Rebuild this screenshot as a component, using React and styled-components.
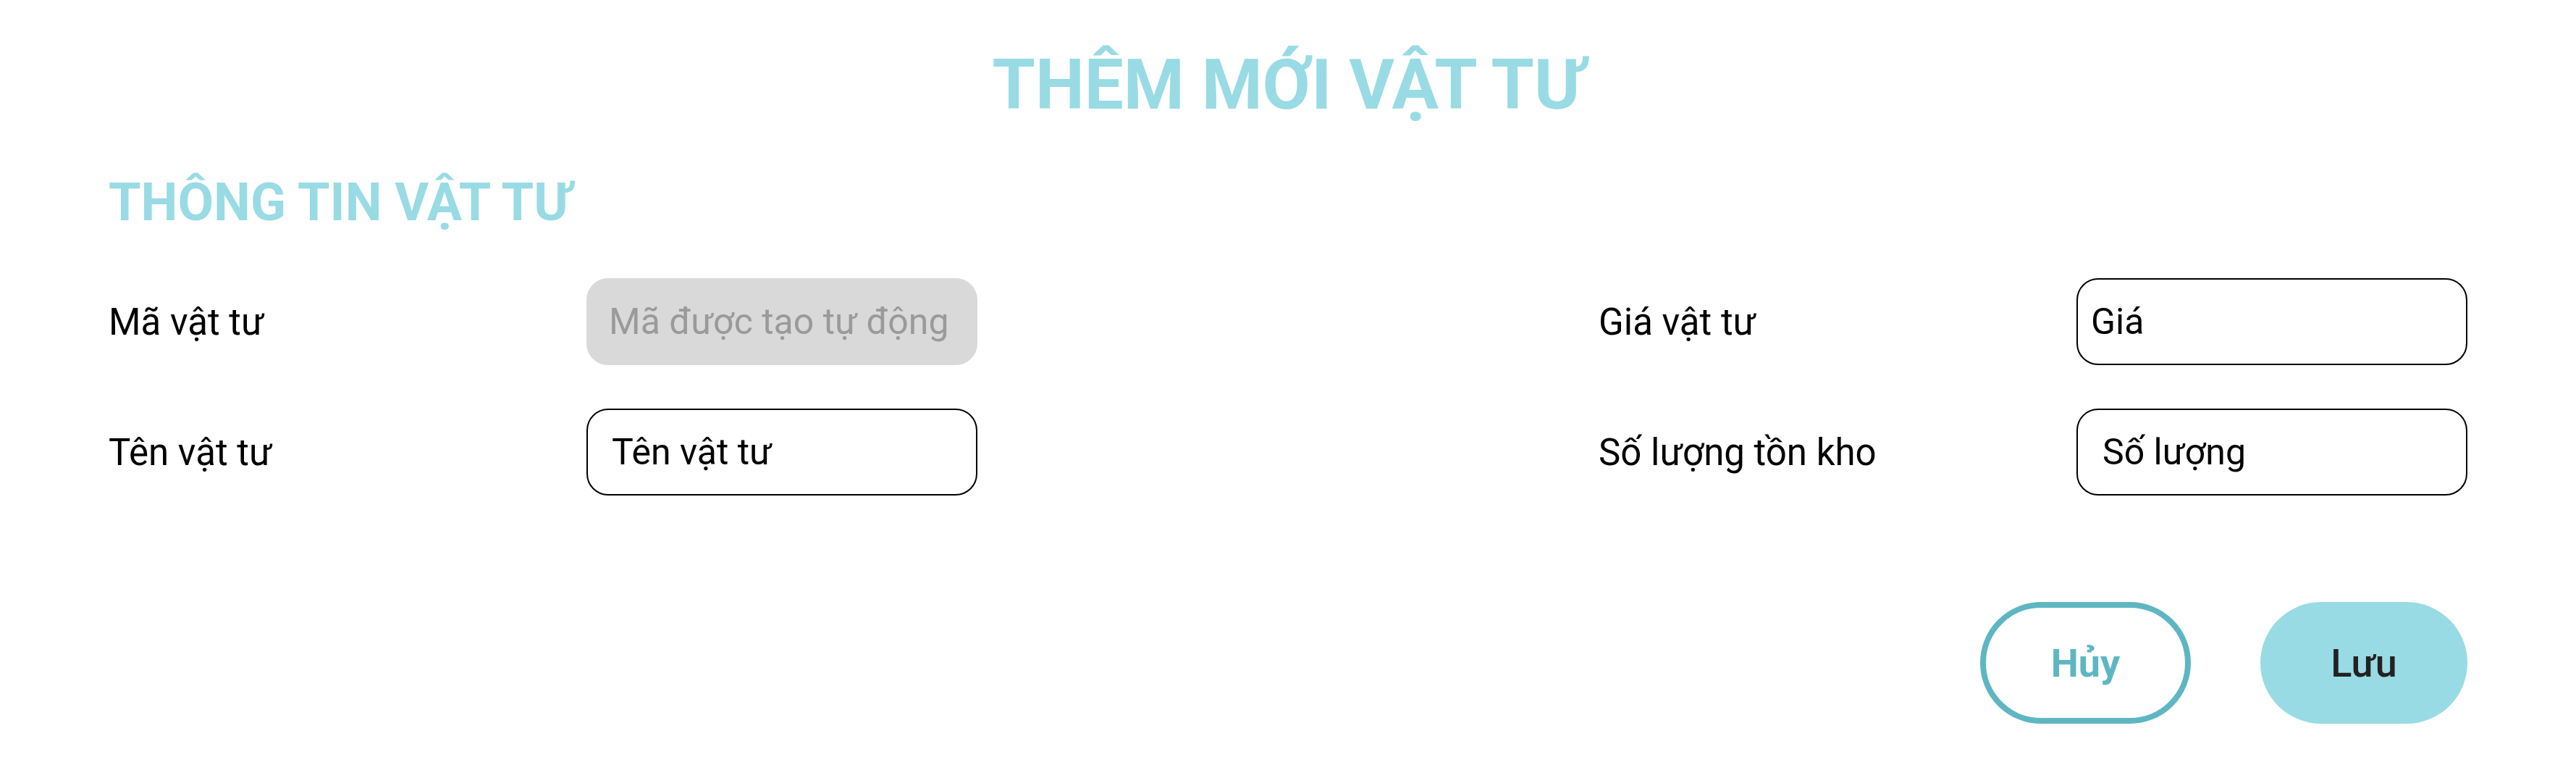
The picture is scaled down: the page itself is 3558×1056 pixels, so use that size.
import styled, { createGlobalStyle } from "styled-components";

const GlobalStyle = createGlobalStyle`
  body {
    margin: 0;
    background: #fff;
    font-family: Roboto, "Noto Sans", sans-serif;
  }
`;

const fields = [
  { label: "Mã vật tư", placeholder: "Mã được tạo tự động", disabled: true, pad: 29 },
  { label: "Giá vật tư", placeholder: "Giá", pad: 18 },
  { label: "Tên vật tư", placeholder: "Tên vật tư", pad: 33 },
  { label: "Số lượng tồn kho", placeholder: "Số lượng", pad: 34 },
];

const App = () => {
  return (
    <>
      <GlobalStyle />
      <Page>
        <Title>THÊM MỚI VẬT TƯ</Title>
        <SectionTitle>THÔNG TIN VẬT TƯ</SectionTitle>
        <FormGrid>
          {fields.map((f) => (
            <Field key={f.label}>
              <Label>{f.label}</Label>
              <TextInput
                type="text"
                placeholder={f.placeholder}
                disabled={f.disabled}
                $pad={f.pad}
              />
            </Field>
          ))}
        </FormGrid>
        <Actions>
          <CancelButton>Hủy</CancelButton>
          <SaveButton>Lưu</SaveButton>
        </Actions>
      </Page>
    </>
  );
};

export default App;

const Page = styled.div`
  padding: 61px 150px 0;
`;

const Title = styled.h1`
  margin: 0;
  text-align: center;
  font-size: 96px;
  line-height: 112px;
  font-weight: 700;
  color: #99dbe4;
`;

const SectionTitle = styled.h2`
  margin: 65px 0 0;
  font-size: 72px;
  line-height: 84px;
  font-weight: 700;
  color: #99dbe4;
`;

const FormGrid = styled.div`
  display: grid;
  grid-template-columns: 1200px 1200px;
  justify-content: space-between;
  row-gap: 60px;
  margin-top: 62px;
`;

const Field = styled.div`
  display: grid;
  grid-template-columns: 660px 540px;
  align-items: center;
  height: 120px;
`;

const Label = styled.span`
  font-size: 51px;
  color: #000;
`;

const TextInput = styled.input`
  box-sizing: border-box;
  width: 540px;
  height: 120px;
  padding-left: ${(p) => p.$pad}px;
  padding-right: 20px;
  border: 2px solid #000;
  border-radius: 30px;
  font-family: Roboto, "Noto Sans", sans-serif;
  font-size: 50px;
  color: #000;
  background: #fff;
  outline: none;

  &::placeholder {
    color: #000;
    opacity: 1;
  }

  &:disabled {
    border-color: #d9d9d9;
    background: #d9d9d9;
  }

  &:disabled::placeholder {
    color: #9a9a9a;
  }
`;

const Actions = styled.div`
  display: flex;
  justify-content: flex-end;
  gap: 96px;
  margin-top: 147px;
`;

const BaseButton = styled.button`
  box-sizing: border-box;
  height: 168px;
  border-radius: 84px;
  font-family: Roboto, "Noto Sans", sans-serif;
  font-size: 54px;
  cursor: pointer;
`;

const CancelButton = styled(BaseButton)`
  width: 291px;
  border: 8px solid #5fb6c3;
  background: #fff;
  color: #5fb6c3;
  font-weight: 700;
`;

const SaveButton = styled(BaseButton)`
  width: 286px;
  border: none;
  background: #99dbe4;
  color: #222;
  font-weight: 500;
`;
